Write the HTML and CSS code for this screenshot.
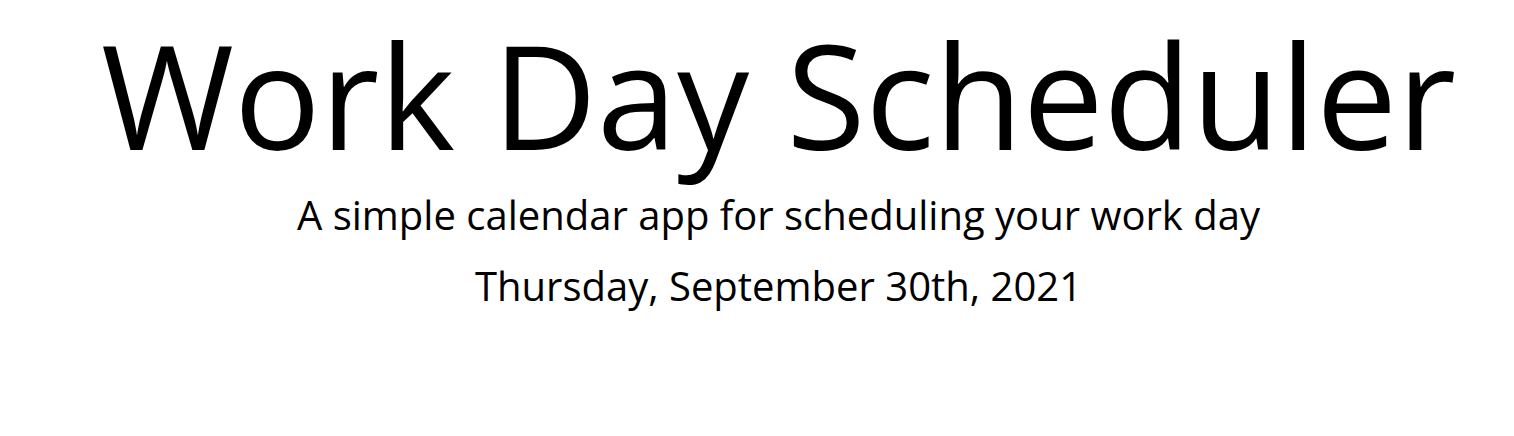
FILE: index.html
```html
<!DOCTYPE html>
<html lang="en">
<head>
<meta charset="utf-8">
<title>Work Day Scheduler</title>
<link rel="stylesheet" href="styles.css">
</head>
<body>
<header class="jumbotron">
  <h1 class="title">Work Day Scheduler</h1>
  <p class="lead">A simple calendar app for scheduling your work day</p>
  <p class="date">Thursday, September 30th, 2021</p>
</header>
</body>
</html>
```
FILE: styles.css
```css
html, body {
  margin: 0;
  padding: 0;
  background: #ffffff;
  color: #000000;
  font-family: "Open Sans", sans-serif;
}
.jumbotron {
  display: flex;
  flex-direction: column;
  align-items: center;
  text-align: center;
  padding: 8px 0 0 43px;
}
.title {
  margin: 0;
  font-size: 144px;
  font-weight: 400;
  line-height: 1.2;
}
.lead {
  margin: 4px 0 0;
  font-size: 40px;
  font-weight: 400;
  line-height: 1.5;
}
.date {
  margin: 11px 0 0;
  font-size: 40px;
  font-weight: 400;
  line-height: 1.5;
}
```
